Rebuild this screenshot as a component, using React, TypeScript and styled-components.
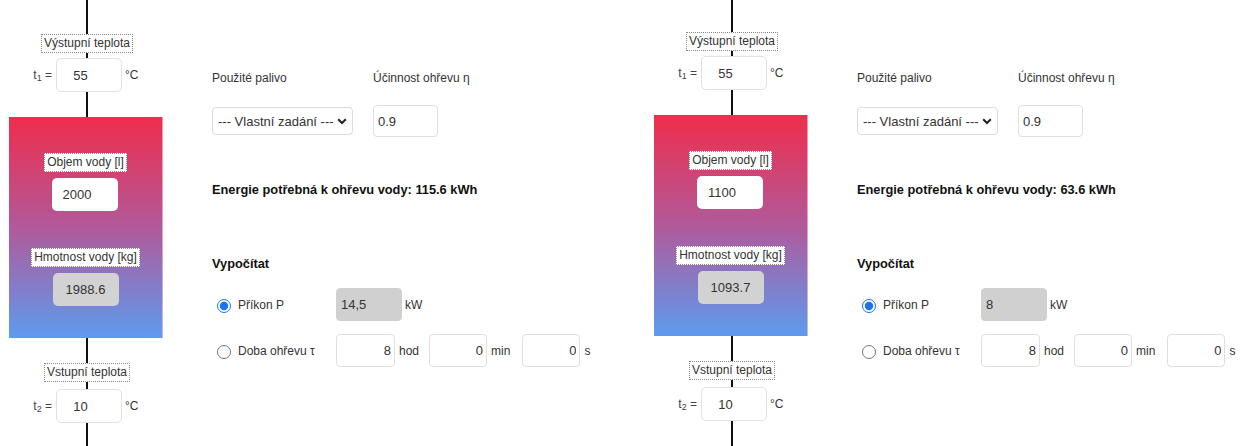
import React from "react";
import styled, { createGlobalStyle } from "styled-components";

const Global = createGlobalStyle`
  html, body { margin: 0; padding: 0; background: #fff; }
  body { font-family: "Liberation Sans", Arial, sans-serif; color: #222; }
  * { box-sizing: border-box; }
`;

const Page = styled.div`
  display: flex;
  width: 1246px;
  height: 446px;
  overflow: hidden;
  background: #fff;
`;

const Panel = styled.div`
  display: flex;
  width: 645px;
  height: 446px;
  flex-shrink: 0;
`;

const PipeColumn = styled.div<{ $lift: number }>`
  width: 174px;
  flex-shrink: 0;
  display: flex;
  flex-direction: column;
  align-items: center;
  margin-top: ${(p) => -p.$lift}px;
  height: ${(p) => 446 + p.$lift}px;
`;

const Pipe = styled.div<{ $h?: number }>`
  width: 2px;
  background: #111;
  flex-shrink: 0;
  height: ${(p) => (p.$h ? `${p.$h}px` : "auto")};
  flex-grow: ${(p) => (p.$h ? 0 : 1)};
`;

const Tag = styled.div`
  height: 19px;
  padding: 0 2px;
  border: 1px dotted #888;
  background: #fff;
  font-size: 12px;
  line-height: 17px;
  color: #333;
  white-space: nowrap;
`;

const TempRow = styled.div`
  align-self: stretch;
  display: grid;
  grid-template-columns: 56px 66px auto;
  align-items: center;
  height: 34px;
`;

const TempPrefix = styled.span`
  text-align: right;
  padding-right: 4px;
  font-size: 12px;
  color: #444;
  sub { font-size: 9px; vertical-align: -2px; }
`;

const Unit = styled.span<{ $gap?: number; $after?: number }>`
  font-size: 12px;
  color: #333;
  margin-left: ${(p) => p.$gap ?? 3}px;
  margin-right: ${(p) => p.$after ?? 0}px;
  white-space: nowrap;
`;

const SpinBox = styled.input`
  width: 66px;
  height: 34px;
  border: 1px solid #e2e2e2;
  border-radius: 5px;
  background: #fff;
  font-family: inherit;
  font-size: 13px;
  color: #333;
  text-align: center;
  padding: 0 17px 0 0;
  outline: none;
`;

const Tank = styled.div`
  width: 154px;
  height: 221px;
  flex-shrink: 0;
  margin-right: 2px;
  background: linear-gradient(180deg, #f02d4c 0%, #b1599a 50%, #5d9bef 100%);
  border-right: 1px solid rgba(255, 190, 210, 0.7);
  display: flex;
  flex-direction: column;
  align-items: center;
  padding-top: 36px;
`;

const TankField = styled.div<{ $space: number }>`
  display: flex;
  flex-direction: column;
  align-items: center;
  gap: 6px;
  margin-bottom: ${(p) => p.$space}px;
`;

const TankInput = styled.input<{ $readonly?: boolean }>`
  width: 66px;
  height: 33px;
  border: none;
  border-radius: 5px;
  background: ${(p) => (p.$readonly ? "#d2d2d2" : "#fff")};
  font-family: inherit;
  font-size: 13px;
  color: #333;
  text-align: center;
  padding: ${(p) => (p.$readonly ? "0" : "0 17px 0 0")};
  outline: none;
`;

const FormArea = styled.div`
  display: flex;
  flex-direction: column;
  padding-left: 38px;
  padding-top: 70px;
`;

const FieldGrid = styled.div`
  display: grid;
  grid-template-columns: 141px 65px;
  grid-template-rows: 16px 32px;
  column-gap: 20px;
  row-gap: 19px;
  align-items: center;
`;

const FieldLabel = styled.div`
  font-size: 12px;
  line-height: 16px;
  color: #333;
  white-space: nowrap;
`;

const SelectWrap = styled.div`
  position: relative;
  width: 141px;
  height: 28px;
`;

const Select = styled.select`
  appearance: none;
  -webkit-appearance: none;
  width: 100%;
  height: 100%;
  border: 1px solid #dcdcdc;
  border-radius: 4px;
  background: #fff;
  font-family: inherit;
  font-size: 13px;
  color: #333;
  padding: 0 0 0 5px;
  outline: none;
`;

const Chevron = styled.svg`
  position: absolute;
  right: 6px;
  top: 11px;
  pointer-events: none;
`;

const PlainInput = styled.input<{ $w: number; $align?: string; $grey?: boolean; $h?: number }>`
  width: ${(p) => p.$w}px;
  height: ${(p) => p.$h ?? 33}px;
  border: 1px solid ${(p) => (p.$grey ? "#d0d0d0" : "#e0e0e0")};
  border-radius: 4px;
  background: ${(p) => (p.$grey ? "#d0d0d0" : "#fff")};
  font-family: inherit;
  font-size: 13px;
  color: #333;
  text-align: ${(p) => p.$align ?? "left"};
  padding: 0 3px 0 4px;
  outline: none;
`;

const Result = styled.div`
  margin-top: 45px;
  font-size: 12.8px;
  font-weight: bold;
  line-height: 16px;
  color: #111;
  white-space: nowrap;
`;

const SectionTitle = styled.div`
  margin-top: 58px;
  font-size: 12.8px;
  font-weight: bold;
  line-height: 16px;
  color: #111;
`;

const CalcRows = styled.div`
  margin-top: 16px;
  display: flex;
  flex-direction: column;
  gap: 13px;
`;

const CalcRow = styled.div`
  display: flex;
  align-items: center;
  height: 33px;
`;

const RadioLabel = styled.label`
  width: 124px;
  display: flex;
  align-items: center;
  font-size: 12px;
  color: #333;
  white-space: nowrap;
`;

const Radio = styled.input`
  width: 14px;
  height: 14px;
  margin: 2px 7px 0 5px;
  accent-color: #1a73f0;
`;

type PanelData = {
  volume: string;
  mass: string;
  energy: string;
  power: string;
  lift: number;
};

function HeaterPanel({ d }: { d: PanelData }) {
  return (
    <Panel>
      <PipeColumn $lift={d.lift}>
        <Pipe $h={34} />
        <Tag>Výstupní teplota</Tag>
        <Pipe $h={5} />
        <TempRow>
          <TempPrefix>
            t<sub>1</sub> =
          </TempPrefix>
          <SpinBox defaultValue="55" />
          <Unit>°C</Unit>
        </TempRow>
        <Pipe $h={25} />
        <Tank>
          <TankField $space={37}>
            <Tag>Objem vody [l]</Tag>
            <TankInput defaultValue={d.volume} />
          </TankField>
          <TankField $space={0}>
            <Tag>Hmotnost vody [kg]</Tag>
            <TankInput $readonly readOnly defaultValue={d.mass} />
          </TankField>
        </Tank>
        <Pipe $h={25} />
        <Tag>Vstupní teplota</Tag>
        <Pipe $h={7} />
        <TempRow>
          <TempPrefix>
            t<sub>2</sub> =
          </TempPrefix>
          <SpinBox defaultValue="10" />
          <Unit>°C</Unit>
        </TempRow>
        <Pipe />
      </PipeColumn>
      <FormArea>
        <FieldGrid>
          <FieldLabel>Použité palivo</FieldLabel>
          <FieldLabel>Účinnost ohřevu η</FieldLabel>
          <SelectWrap>
            <Select defaultValue="own">
              <option value="own">--- Vlastní zadání ---</option>
            </Select>
            <Chevron width="10" height="7" viewBox="0 0 10 7">
              <path d="M1.2 1.2 L5 5 L8.8 1.2" fill="none" stroke="#222" strokeWidth="2" />
            </Chevron>
          </SelectWrap>
          <PlainInput $w={65} $h={32} defaultValue="0.9" />
        </FieldGrid>
        <Result>Energie potřebná k ohřevu vody: {d.energy} kWh</Result>
        <SectionTitle>Vypočítat</SectionTitle>
        <CalcRows>
          <CalcRow>
            <RadioLabel>
              <Radio type="radio" name={`calc-${d.volume}`} defaultChecked />
              Příkon P
            </RadioLabel>
            <PlainInput $w={66} $grey readOnly defaultValue={d.power} />
            <Unit>kW</Unit>
          </CalcRow>
          <CalcRow>
            <RadioLabel>
              <Radio type="radio" name={`calc-${d.volume}`} />
              Doba ohřevu τ
            </RadioLabel>
            <PlainInput $w={59} $align="right" defaultValue="8" />
            <Unit $gap={4} $after={10}>hod</Unit>
            <PlainInput $w={58} $align="right" defaultValue="0" />
            <Unit $gap={4} $after={12}>min</Unit>
            <PlainInput $w={58} $align="right" defaultValue="0" />
            <Unit $gap={4}>s</Unit>
          </CalcRow>
        </CalcRows>
      </FormArea>
    </Panel>
  );
}

const panels: PanelData[] = [
  { volume: "2000", mass: "1988.6", energy: "115.6", power: "14,5", lift: 0 },
  { volume: "1100", mass: "1093.7", energy: "63.6", power: "8", lift: 2 },
];

export default function App() {
  return (
    <Page>
      <Global />
      {panels.map((d) => (
        <HeaterPanel key={d.volume} d={d} />
      ))}
    </Page>
  );
}
